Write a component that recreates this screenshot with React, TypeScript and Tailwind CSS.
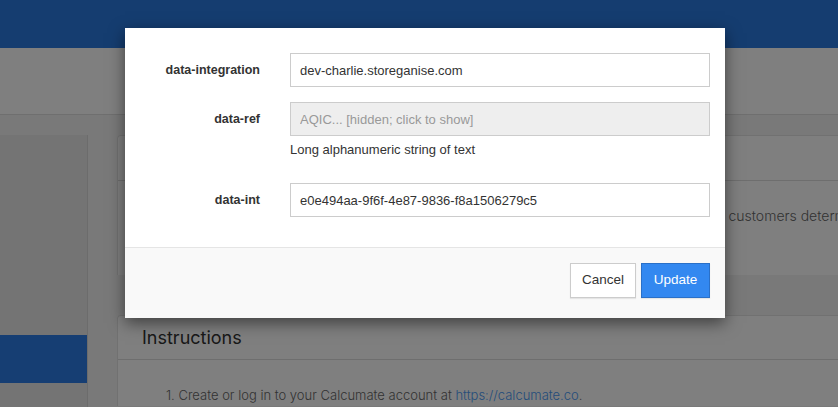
import React from "react";

const App = () => {
  const [integration, setIntegration] = React.useState("dev-charlie.storeganise.com");
  const [intId, setIntId] = React.useState("e0e494aa-9f6f-4e87-9836-f8a1506279c5");

  return (
    <div
      className="relative h-[407px] w-[838px] overflow-hidden bg-[#f3f3f3]"
      style={{ fontFamily: "Inter, 'Noto Sans', sans-serif" }}
    >
      {/* page underneath */}
      <div className="h-12 bg-[#2a7ae0]" />
      <div className="h-[67px] border-b border-[#dedede] bg-white" />
      <div className="flex pt-5">
        <div className="h-[300px] w-[88px] shrink-0 border-r border-[#d8d8d8] bg-[#e8e8e8]">
          <div className="mt-[200px] h-12 bg-[#2c7ce6]" />
        </div>
        <div className="ml-[29px] flex flex-1 flex-col gap-10">
          <div className="h-[140px] rounded-tl border-l border-t border-[#e2e2e2] bg-white">
            <div className="h-[45px] border-b border-[#dcdcdc]" />
            <p className="whitespace-nowrap pl-[50px] pt-[25px] text-sm font-light text-[#666]">
              Calcumate is an online storage calculator that you embed in your website to help your customers determine how much space they need.
            </p>
          </div>
          <div className="rounded-tl border-l border-t border-[#e2e2e2] bg-white">
            <div className="flex h-[44px] items-center border-b border-[#dcdcdc] pl-6 text-lg text-[#333]">
              Instructions
            </div>
            <p className="whitespace-nowrap pl-12 pt-[26px] text-[13px] font-light text-[#666]">
              1. Create or log in to your Calcumate account at{" "}
              <span className="text-[#4a9af5]">https://calcumate.co</span>.
            </p>
          </div>
        </div>
      </div>

      {/* backdrop */}
      <div className="absolute inset-0 bg-black/50" />

      {/* modal */}
      <div
        className="absolute left-[125px] top-[28px] w-[600px] bg-white shadow-[0_5px_15px_rgba(0,0,0,0.5)]"
        style={{ fontFamily: "'Liberation Sans', Arial, sans-serif" }}
      >
        <div className="flex flex-col px-[15px] pb-[30px] pt-[25px]">
          <div className="flex items-center">
            <label className="w-[120px] text-right text-[12.5px] font-bold text-[#333]">
              data-integration
            </label>
            <input
              type="text"
              value={integration}
              onChange={(e) => setIntegration(e.target.value)}
              className="ml-[30px] h-[34px] flex-1 border border-[#ccc] px-[9px] text-[13px] text-[#333] outline-none"
            />
          </div>
          <div className="mt-[15px] flex items-center">
            <label className="w-[120px] text-right text-[12.5px] font-bold text-[#333]">
              data-ref
            </label>
            <input
              type="text"
              disabled
              value="AQIC... [hidden; click to show]"
              className="ml-[30px] h-[34px] flex-1 border border-[#ccc] bg-[#eee] px-[9px] text-[13px] text-[#999] outline-none"
            />
          </div>
          <p className="ml-[150px] mt-[5px] text-[13px] leading-[18px] text-[#333]">
            Long alphanumeric string of text
          </p>
          <div className="mt-[24px] flex items-center">
            <label className="w-[120px] text-right text-[12.5px] font-bold text-[#333]">
              data-int
            </label>
            <input
              type="text"
              value={intId}
              onChange={(e) => setIntId(e.target.value)}
              className="ml-[30px] h-[34px] flex-1 border border-[#ccc] px-[9px] text-[13px] text-[#333] outline-none"
            />
          </div>
        </div>
        <div className="flex h-[71px] justify-end gap-[5px] border-t border-[#e5e5e5] bg-[#f9f9f9] px-[15px] pt-[15px]">
          <button className="h-[35px] w-[66px] border border-[#ccc] bg-white text-[13.5px] text-[#333] shadow-[0_1px_1px_rgba(0,0,0,0.08)]">
            Cancel
          </button>
          <button className="h-[35px] w-[69px] border border-[#2a70c8] bg-[#3388f0] text-[13.5px] text-white shadow-[0_1px_1px_rgba(0,0,0,0.08)]">
            Update
          </button>
        </div>
      </div>
    </div>
  );
};

export default App;
